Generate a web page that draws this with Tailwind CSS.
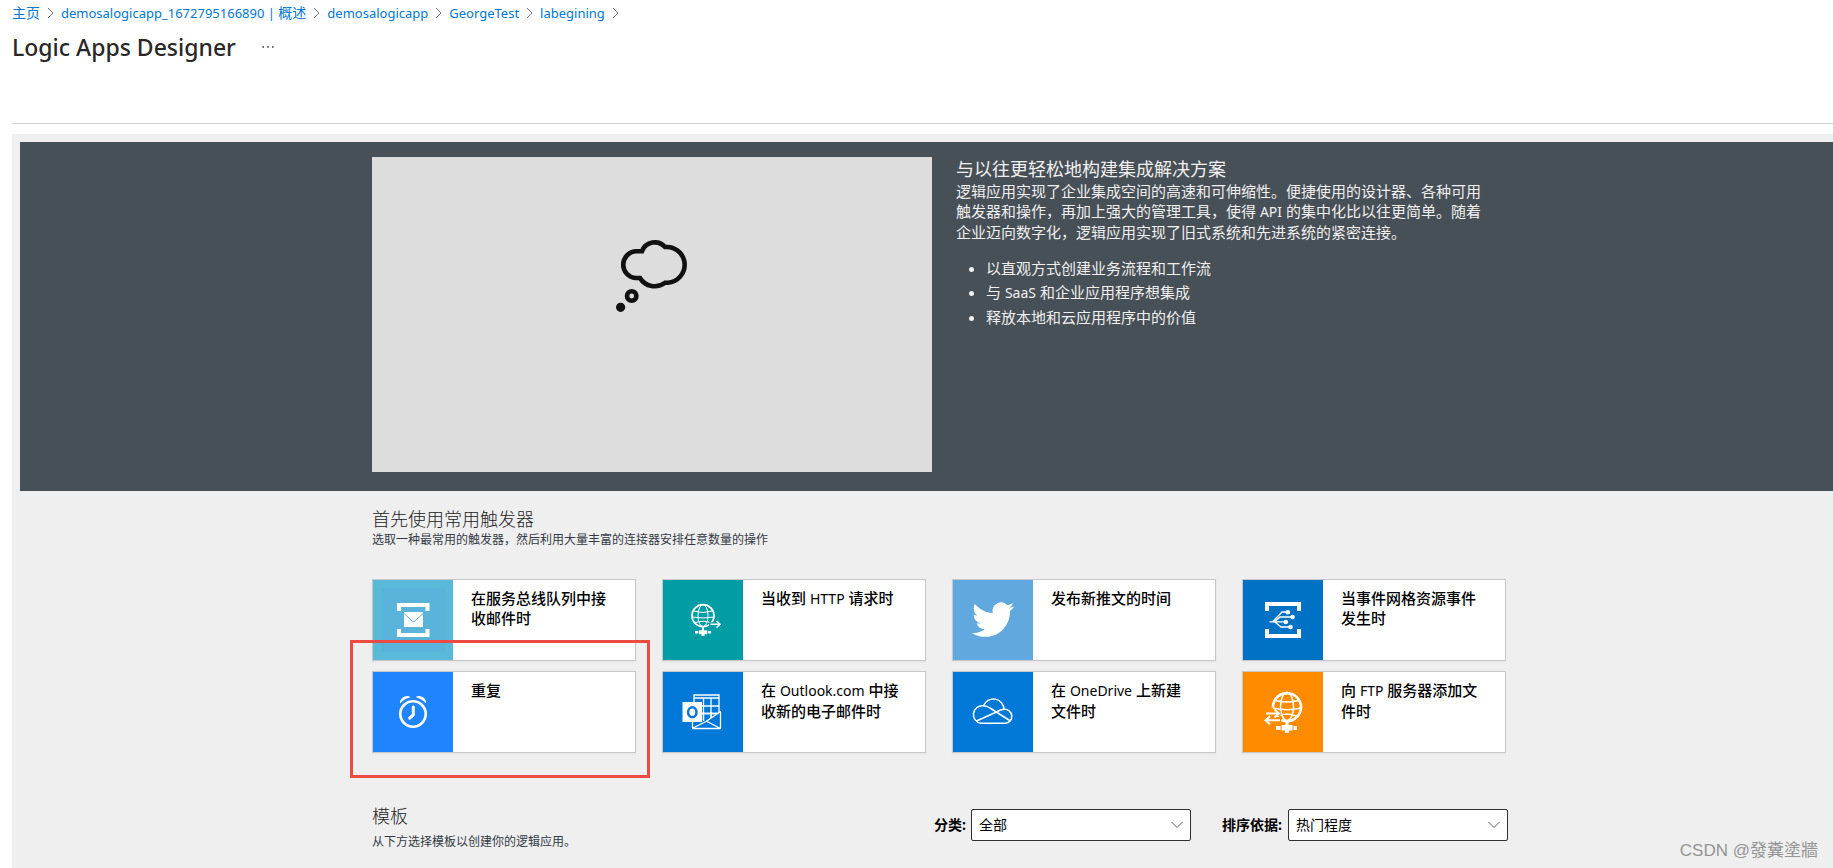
<!DOCTYPE html>
<html lang="zh-CN">
<head>
<meta charset="utf-8">
<title>Logic Apps Designer</title>
<script src="https://cdn.jsdelivr.net/npm/@tailwindcss/browser@4"></script>
</head>
<body class="relative flex min-h-screen flex-col overflow-x-hidden bg-white font-['Noto_Sans','Noto_Sans_CJK_SC',sans-serif] text-black">

<header class="ml-3 h-[124px] border-b border-[#d2d2d2]">
  <nav aria-label="Breadcrumb" class="pt-[3px]">
    <ol class="flex h-5 items-center gap-[7px] text-[13px] leading-5 text-[#0078d4]">
      <li><a href="#" class="text-sm">主页</a></li>
      <li aria-hidden="true"><svg class="h-3 w-[7px]" viewBox="0 0 7 12" fill="none" stroke="#767676"><path d="M1 1l5 5-5 5"/></svg></li>
      <li><a href="#">demosalogicapp_1672795166890 | <span class="text-sm">概述</span></a></li>
      <li aria-hidden="true"><svg class="h-3 w-[7px]" viewBox="0 0 7 12" fill="none" stroke="#767676"><path d="M1 1l5 5-5 5"/></svg></li>
      <li><a href="#">demosalogicapp</a></li>
      <li aria-hidden="true"><svg class="h-3 w-[7px]" viewBox="0 0 7 12" fill="none" stroke="#767676"><path d="M1 1l5 5-5 5"/></svg></li>
      <li><a href="#">GeorgeTest</a></li>
      <li aria-hidden="true"><svg class="h-3 w-[7px]" viewBox="0 0 7 12" fill="none" stroke="#767676"><path d="M1 1l5 5-5 5"/></svg></li>
      <li><a href="#">labegining</a></li>
      <li aria-hidden="true"><svg class="h-3 w-[7px]" viewBox="0 0 7 12" fill="none" stroke="#767676"><path d="M1 1l5 5-5 5"/></svg></li>
    </ol>
  </nav>
  <div class="mt-2 flex items-center gap-6">
    <h1 class="text-[23px] leading-8 font-medium text-[#292827]">Logic Apps Designer</h1>
    <button type="button" aria-label="More" class="flex h-6 w-4 items-center justify-center">
      <svg class="h-1 w-3" viewBox="0 0 12 4" fill="#555"><circle cx="1.2" cy="2" r=".9"/><circle cx="6" cy="2" r=".9"/><circle cx="10.8" cy="2" r=".9"/></svg>
    </button>
  </div>
</header>

<main class="mt-[10px] ml-3 flex flex-1 flex-col bg-[#efefef] pt-2 pl-2">
  <section class="bg-[#474f57] pt-[15px] pb-[19px] pl-[51px] text-[#f0f0f0]">
    <div class="mx-auto flex max-w-[1160px] items-start gap-6">
      <div class="flex h-[315px] w-[560px] shrink-0 justify-center bg-[#ddd] pt-[82px]">
        <svg class="h-[74px] w-[74px]" viewBox="0 0 74 74" fill="none" stroke="#111" stroke-width="4.6" role="img" aria-label="Video">
          <path d="M27 12.3A13.6 13.6 0 0 1 50 8H53A18 17.9 0 0 1 53 43.7H50A17 17 0 0 1 25 39H20.5A13.4 13.4 0 0 1 20.5 12.3Z"/>
          <circle cx="16.7" cy="57" r="4.7"/><circle cx="5.6" cy="68.3" r="4.6" fill="#111" stroke="none"/>
        </svg>
      </div>
      <div class="w-[526px] text-[15px] leading-5">
        <h2 class="text-[18px] leading-6">与以往更轻松地构建集成解决方案</h2>
        <p>逻辑应用实现了企业集成空间的高速和可伸缩性。便捷使用的设计器、各种可用<br>触发器和操作，再加上强大的管理工具，使得 <span class="text-sm leading-5">API</span> 的集中化比以往更简单。随着<br>企业迈向数字化，逻辑应用实现了旧式系统和先进系统的紧密连接。</p>
        <ul class="mt-[14px] list-disc pl-[30px] leading-6">
          <li>以直观方式创建业务流程和工作流</li>
          <li>与 <span class="text-sm leading-6">SaaS</span> 和企业应用程序想集成</li>
          <li>释放本地和云应用程序中的价值</li>
        </ul>
      </div>
    </div>
  </section>

  <section class="pl-[51px]">
    <div class="mx-auto max-w-[1160px] pt-4">
      <h2 class="text-[18px] leading-6 font-light text-[#222]">首先使用常用触发器</h2>
      <p class="mt-px text-xs leading-4 text-[#333a45]">选取一种最常用的触发器，然后利用大量丰富的连接器安排任意数量的操作</p>

      <div class="relative mt-[31px] grid grid-cols-[repeat(4,264px)] gap-x-[26px] gap-y-[10px] text-[15px] leading-5 font-medium">
        <button type="button" class="flex h-[82px] border border-[#c8c8c8] bg-white text-left shadow-xs">
          <svg class="size-20 shrink-0 bg-[#5ab9d8]" viewBox="0 0 80 80" fill="none" stroke="#fff"><path d="M8 8h64v64H8z" fill="#59b3da" stroke="none"/><path d="M26 31v-6h28.500v6M26 49v6h28.500v-6" stroke-width="4"/><path d="M31 32h19v15H31z" fill="#fff" stroke="none"/><path d="M31 33.500l8 7.500q1.500 1 3 0l8-7.500" stroke="#59b3da"/></svg>
          <span class="flex-1 pt-2 pr-2 pl-[18px]">在服务总线队列中接<br>收邮件时</span>
        </button>
        <button type="button" class="flex h-[82px] border border-[#c8c8c8] bg-white text-left shadow-xs">
          <svg class="size-20 shrink-0 bg-[#009da5]" viewBox="0 0 80 80" fill="none" stroke="#fff"><circle cx="40" cy="35.700" r="11" stroke-width="1.700"/><ellipse cx="40" cy="35.700" rx="5" ry="11"/><path d="M30.500 31q9.500 3 19 0M29 37q11 2 22 0M31 43q9-3.500 18 0"/><path d="M40 46v5" stroke-width="2"/><path d="M36 50.300h8v4h-8zM32 51h3.300v2.600H32zM44.700 51H48v2.600h-3.300zM38.500 54h3v2h-3z" fill="#fff" stroke="none"/><path d="M46 44.300h11" stroke="#009da5" stroke-width="4"/><path d="M47.500 44.300H57M53.500 41l3.500 3.300-3.500 3.300" stroke-width="1.500"/></svg>
          <span class="flex-1 pt-2 pr-2 pl-[18px]">当收到 <span class="text-sm leading-5 font-normal">HTTP</span> 请求时</span>
        </button>
        <button type="button" class="flex h-[82px] border border-[#c8c8c8] bg-white text-left shadow-xs">
          <svg class="size-20 shrink-0 bg-[#60a8dd]" viewBox="0 0 80 80" fill="#fff"><path transform="translate(19 18.500) scale(1.760)" d="M23.953 4.570a10 10 0 0 1-2.825.775 4.958 4.958 0 0 0 2.163-2.723c-.951.555-2.005.959-3.127 1.184a4.920 4.920 0 0 0-8.384 4.482C7.690 8.095 4.067 6.130 1.640 3.162a4.822 4.822 0 0 0-.666 2.475c0 1.710.870 3.213 2.188 4.096a4.904 4.904 0 0 1-2.228-.616v.060a4.923 4.923 0 0 0 3.946 4.827 4.996 4.996 0 0 1-2.212.085 4.936 4.936 0 0 0 4.604 3.417 9.867 9.867 0 0 1-6.102 2.105c-.390 0-.779-.023-1.170-.067a13.995 13.995 0 0 0 7.557 2.209c9.053 0 13.998-7.496 13.998-13.985 0-.210 0-.420-.015-.630A9.935 9.935 0 0 0 24 4.590z"/></svg>
          <span class="flex-1 pt-2 pr-2 pl-[18px]">发布新推文的时间</span>
        </button>
        <button type="button" class="flex h-[82px] border border-[#c8c8c8] bg-white text-left shadow-xs">
          <svg class="size-20 shrink-0 bg-[#0072c6]" viewBox="0 0 80 80" fill="none" stroke="#fff"><path d="M24 31v-7h32v7M24 49v7h32v-7" stroke-width="4"/><path d="M26.500 41.800h16M30 41.500l9-9.500h6M32 41.500l5-4.500h12M32 42l6 5h9" stroke-width="1.300"/><g fill="#fff" stroke="none"><circle cx="44.800" cy="32.200" r="2.300"/><circle cx="49.500" cy="37" r="2.300"/><circle cx="42.800" cy="42" r="2.300"/><circle cx="47.500" cy="47" r="2.300"/></g></svg>
          <span class="flex-1 pt-2 pr-2 pl-[18px]">当事件网格资源事件<br>发生时</span>
        </button>

        <button type="button" class="flex h-[82px] border border-[#c8c8c8] bg-white text-left shadow-xs">
          <svg class="size-20 shrink-0 bg-[#1e85ff]" viewBox="0 0 80 80" fill="none" stroke="#fff"><circle cx="40" cy="42" r="12.700" stroke-width="2.600"/><path d="M40.300 35v7.800l-3.600 3.400" stroke-width="3" stroke-linecap="round" stroke-linejoin="round"/><path d="M27 31.500q-.500-6.500 7-7.500 2-.200 3.300 1.300-6 1.500-10.300 6.200zM53 31.500q.500-6.500-7-7.500-2-.200-3.300 1.300 6 1.500 10.300 6.200z" fill="#fff" stroke="none"/></svg>
          <span class="flex-1 pt-2 pr-2 pl-[18px]">重复</span>
        </button>
        <button type="button" class="flex h-[82px] border border-[#c8c8c8] bg-white text-left shadow-xs">
          <svg class="size-20 shrink-0 bg-[#0078d7]" viewBox="0 0 80 80" fill="none" stroke="#fff" stroke-width="1.300"><path d="M31 47V23h25v19M31 26h25M40.500 26v24M48 26v20M31 34h25M31 41.500h25"/><path d="M29.500 47v9.500h28V39.500L43 49.500 29.500 46z" fill="#0078d7" stroke="none"/><path d="M40.500 40v8.500M48 40v6M39 41.500h15"/><path d="M29.500 50v6.500h28V39.500L43 49.500 30 56M43 49l14.500 7.500" stroke-linejoin="round"/><path d="M19.500 30H39v20H19.500z" fill="#fff" stroke="none"/><ellipse cx="29.300" cy="40.200" rx="4.200" ry="4.900" stroke="#0078d7" stroke-width="2.500"/></svg>
          <span class="flex-1 pt-2 pr-2 pl-[18px]">在 <span class="text-sm leading-5 font-normal">Outlook.com</span> 中接<br>收新的电子邮件时</span>
        </button>
        <button type="button" class="flex h-[82px] border border-[#c8c8c8] bg-white text-left shadow-xs">
          <svg class="size-20 shrink-0 bg-[#0078d7]" viewBox="0 0 80 80" fill="none" stroke="#fff" stroke-width="1.500" stroke-linejoin="round"><path d="M28 51.300a8.800 8.800 0 0 1 2.500-17.500 10.600 10.600 0 0 1 20.500 3.500 7 7 0 0 1 1.500 14z"/><path d="M30.500 33.800Q34 34 37 36l20.500 13M23.500 49l20-9q4-2.500 7.500-2.700"/></svg>
          <span class="flex-1 pt-2 pr-2 pl-[18px]">在 <span class="text-sm leading-5 font-normal">OneDrive</span> 上新建<br>文件时</span>
        </button>
        <button type="button" class="flex h-[82px] border border-[#c8c8c8] bg-white text-left shadow-xs">
          <svg class="size-20 shrink-0 bg-[#ff8c00]" viewBox="0 0 80 80" fill="none" stroke="#fff"><path d="M30 35.500a14 14 0 1 1 8.500 12.500" stroke-width="2.600"/><ellipse cx="44" cy="34.500" rx="6.500" ry="14" stroke-width="1.500"/><path d="M32.500 28.500q11.500 3 23 0M30 36q14 3.500 28 0M34 44.500q10-5 20 0" stroke-width="1.500"/><path d="M44 48v6" stroke-width="3"/><path d="M38.500 53h11v5.500h-11zM33 54h4.500v4H33zM50.500 54H54v4h-3.500zM42 58h4v2.700h-4z" fill="#fff" stroke="none"/><path d="M22 41.500h15.500" stroke="#ff8c00" stroke-width="5"/><path d="M23 41.500h12.500M31.500 37.500l4.500 4-4.500 4M37 48.200H22.500M27 44.200l-4.500 4 4.500 4" stroke-width="2"/></svg>
          <span class="flex-1 pt-2 pr-2 pl-[18px]">向 <span class="text-sm leading-5 font-normal">FTP</span> 服务器添加文<br>件时</span>
        </button>

        <div aria-hidden="true" class="pointer-events-none absolute top-[61px] -left-[22px] h-[138px] w-[300px] border-3 border-[#ec4a43]"></div>
      </div>

      <div class="mt-[51px] flex items-start">
        <div class="w-[562px]">
          <h2 class="text-[18px] leading-6 font-light text-[#222]">模板</h2>
          <p class="mt-[6px] text-xs leading-4 text-[#333a45]">从下方选择模板以创建你的逻辑应用。</p>
        </div>
        <div class="mt-[5px] flex items-center text-sm">
          <label for="category" class="w-[37px] whitespace-nowrap font-bold">分类:</label>
          <div class="relative">
            <select id="category" class="h-8 w-[220px] appearance-none rounded-xs border border-[#323130] bg-white px-[7px] text-sm">
              <option>全部</option>
            </select>
            <svg class="pointer-events-none absolute top-3 right-2 h-2 w-3" viewBox="0 0 12 8" fill="none" stroke="#605e5c"><path d="M.5 1L6 6.500 11.500 1"/></svg>
          </div>
          <label for="sort" class="ml-[31px] w-[66px] whitespace-nowrap font-bold">排序依据:</label>
          <div class="relative">
            <select id="sort" class="h-8 w-[220px] appearance-none rounded-xs border border-[#323130] bg-white px-[7px] text-sm">
              <option>热门程度</option>
            </select>
            <svg class="pointer-events-none absolute top-3 right-2 h-2 w-3" viewBox="0 0 12 8" fill="none" stroke="#605e5c"><path d="M.5 1L6 6.500 11.500 1"/></svg>
          </div>
        </div>
      </div>
    </div>
  </section>
</main>

<div class="absolute right-[15px] bottom-[5px] font-['Liberation_Sans','Noto_Sans_CJK_TC',sans-serif] text-[17px] leading-6 text-[#949494]">CSDN @發糞塗牆</div>
</body>
</html>
